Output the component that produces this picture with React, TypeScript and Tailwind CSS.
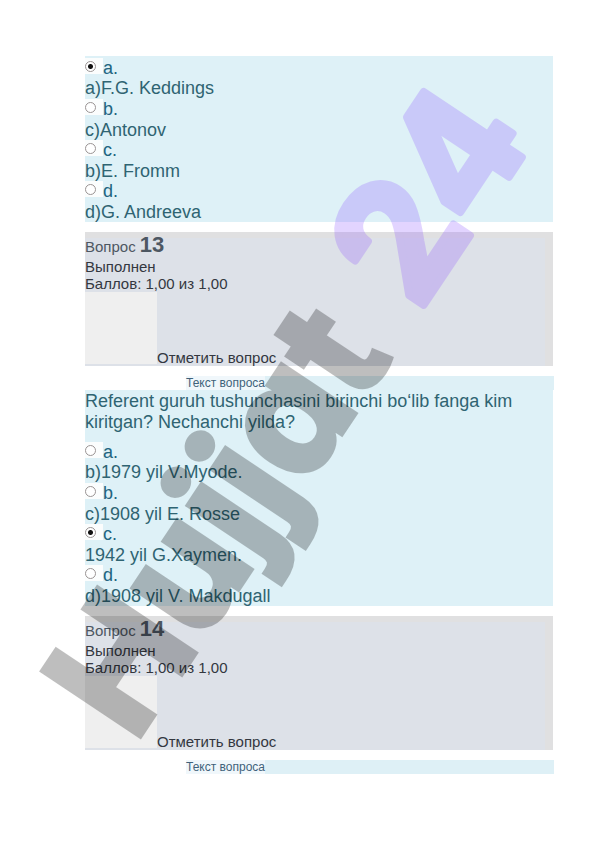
type Option = { letter: string; text: string; checked?: boolean }

const question12: Option[] = [
  { letter: 'a.', text: 'a)F.G. Keddings', checked: true },
  { letter: 'b.', text: 'c)Antonov' },
  { letter: 'c.', text: 'b)E. Fromm' },
  { letter: 'd.', text: 'd)G. Andreeva' },
]

const question13: Option[] = [
  { letter: 'a.', text: 'b)1979 yil V.Myode.' },
  { letter: 'b.', text: 'c)1908 yil E. Rosse' },
  { letter: 'c.', text: '1942 yil G.Xaymen.', checked: true },
  { letter: 'd.', text: 'd)1908 yil V. Makdugall' },
]

function Options({ name, options }: { name: string; options: Option[] }) {
  return (
    <div className="grid min-h-[166px] auto-rows-fr pt-px">
      {options.map((option) => (
        <label key={option.letter} className="grid auto-rows-fr items-end">
          <span className="flex items-end text-[#226480]">
            <span className="flex h-4 w-[18px] items-start self-start bg-[#fbfdfd] pt-[3px]">
              <input
                type="radio"
                name={name}
                defaultChecked={option.checked}
                className="size-[11px] appearance-none rounded-full border border-[#9a9494] bg-white checked:bg-[radial-gradient(circle,#111_0_2px,#fff_3px)]"
              />
            </span>
            <span>{option.letter}</span>
          </span>
          <span>{option.text}</span>
        </label>
      ))}
    </div>
  )
}

function Info({ number }: { number: number }) {
  return (
    <section className="my-[10px] border-t-[6px] border-r-8 border-[#e0e0e1] bg-[#dde1e8] text-[15px] leading-[17px] text-[#33373f]">
      <h2 className="-mt-[6px] pt-0.5 leading-[22px] text-[#4d5762]">
        Вопрос <span className="text-[22px] font-bold">{number}</span>
      </h2>
      <p>Выполнен</p>
      <p>Баллов: 1,00 из 1,00</p>
      <div className="flex items-end">
        <span className="mb-[2px] h-[72px] w-[72px] bg-[#efefef]" />
        <button type="button">Отметить вопрос</button>
      </div>
    </section>
  )
}

function TextHeading() {
  return (
    <h3 className="-mr-px ml-[101px] flex bg-[#def0f6] text-[12px] leading-[14px] text-[#41627a]">
      <span className="bg-[#f0f7fb]">Текст вопроса</span>
    </h3>
  )
}

function Watermark() {
  return (
    <svg
      viewBox="0 0 596 842"
      aria-hidden="true"
      className="pointer-events-none absolute inset-x-0 top-0 w-full font-['Inter',sans-serif] font-bold [font-feature-settings:'cv11','ss03']"
    >
      <g transform="translate(141 734) rotate(-56.3)" opacity="0.25">
        <text x="-12" y="0" fontSize="160" fill="#000" stroke="#000" strokeWidth="6">Hujjat</text>
        <text x="504" y="-3" fontSize="162" fill="#8f57ff" stroke="#8f57ff" strokeWidth="8" strokeLinejoin="round">24</text>
      </g>
    </svg>
  )
}

export default function App() {
  return (
    <main className="relative min-h-screen overflow-hidden bg-white pt-14 pr-[43px] pb-16 pl-[85px] font-['Liberation_Sans',Arial,sans-serif] text-[18px] leading-5 text-[#2f6472]">
      <section className="bg-[#def1f7]">
        <Options name="question-12" options={question12} />
      </section>
      <Info number={13} />
      <TextHeading />
      <section className="bg-[#def1f7]">
        <p className="pt-px pb-[7px] leading-[21px]">
          Referent guruh tushunchasini birinchi bo‘lib fanga kim kiritgan? Nechanchi yilda?
        </p>
        <Options name="question-13" options={question13} />
      </section>
      <Info number={14} />
      <TextHeading />
      <Watermark />
    </main>
  )
}
